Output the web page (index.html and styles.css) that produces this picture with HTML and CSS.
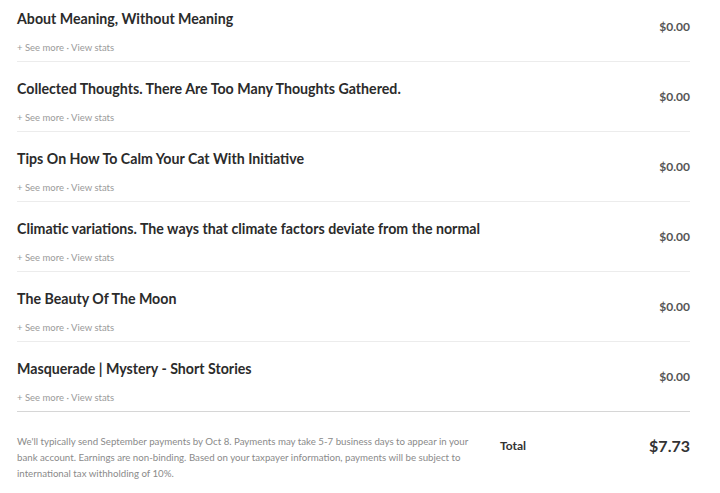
FILE: index.html
```html
<!DOCTYPE html>
<html lang="en">
<head>
    <meta charset="UTF-8">
    <title>Earnings</title>
    <link rel="stylesheet" href="styles.css">
</head>
<body>
    <div class="earnings">
        <div class="story-row">
            <div class="story-info">
                <h3 class="story-title">About Meaning, Without Meaning</h3>
                <div class="story-links">+ See more &middot; View stats</div>
            </div>
            <div class="story-amount">$0.00</div>
        </div>
        <div class="story-row">
            <div class="story-info">
                <h3 class="story-title">Collected Thoughts. There Are Too Many Thoughts Gathered.</h3>
                <div class="story-links">+ See more &middot; View stats</div>
            </div>
            <div class="story-amount">$0.00</div>
        </div>
        <div class="story-row">
            <div class="story-info">
                <h3 class="story-title">Tips On How To Calm Your Cat With Initiative</h3>
                <div class="story-links">+ See more &middot; View stats</div>
            </div>
            <div class="story-amount">$0.00</div>
        </div>
        <div class="story-row">
            <div class="story-info">
                <h3 class="story-title">Climatic variations. The ways that climate factors deviate from the normal</h3>
                <div class="story-links">+ See more &middot; View stats</div>
            </div>
            <div class="story-amount">$0.00</div>
        </div>
        <div class="story-row">
            <div class="story-info">
                <h3 class="story-title">The Beauty Of The Moon</h3>
                <div class="story-links">+ See more &middot; View stats</div>
            </div>
            <div class="story-amount">$0.00</div>
        </div>
        <div class="story-row last">
            <div class="story-info">
                <h3 class="story-title">Masquerade | Mystery - Short Stories</h3>
                <div class="story-links">+ See more &middot; View stats</div>
            </div>
            <div class="story-amount">$0.00</div>
        </div>

        <div class="summary">
            <p class="note">We'll typically send September payments by Oct 8. Payments may take 5-7 business days to appear in your bank account. Earnings are non-binding. Based on your taxpayer information, payments will be subject to international tax withholding of 10%.</p>
            <div class="total-label">Total</div>
            <div class="total-amount">$7.73</div>
        </div>
    </div>
</body>
</html>
```

FILE: styles.css
```css
* {
    margin: 0;
    padding: 0;
    box-sizing: border-box;
}

body {
    font-family: 'Lato', 'Noto Sans', sans-serif;
    background: #fff;
    color: rgba(0, 0, 0, 0.84);
}

.earnings {
    width: 690px;
    padding-left: 17px;
}

.story-row {
    display: flex;
    justify-content: space-between;
    height: 70px;
    border-bottom: 1px solid #ececec;
}

.story-row:first-child {
    height: 62px;
}

.story-row.last {
    border-bottom: 1px solid #d6d6d6;
}

.story-info {
    padding-top: 9px;
}

.story-row + .story-row .story-info {
    padding-top: 17px;
}

.story-title {
    font-size: 14.2px;
    font-weight: 700;
    line-height: 20px;
    color: #2b2b2b;
}

.story-links {
    margin-top: 12px;
    font-size: 9.5px;
    line-height: 14px;
    color: #9a9a9a;
}

.story-amount {
    padding-top: 19px;
    font-size: 12px;
    font-weight: 700;
    color: #555;
}

.story-row + .story-row .story-amount {
    padding-top: 27px;
}

.summary {
    display: flex;
    align-items: flex-start;
    padding-top: 21px;
}

.note {
    width: 470px;
    font-size: 9.7px;
    line-height: 16px;
    color: #8a8a8a;
}

.total-label {
    margin-left: 13px;
    padding-top: 5px;
    font-size: 12px;
    font-weight: 700;
    color: #333;
}

.total-amount {
    margin-left: auto;
    padding-top: 3px;
    font-size: 16px;
    font-weight: 700;
    color: #333;
}
```
